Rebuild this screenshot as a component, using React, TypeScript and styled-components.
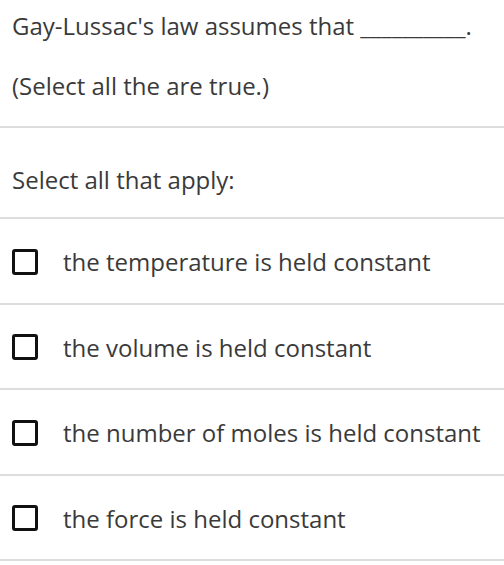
import React from 'react'
import styled, { createGlobalStyle } from 'styled-components'

const GlobalStyle = createGlobalStyle`
    body {
        margin: 0;
        background: #fff;
        font-family: "Open Sans", "Liberation Sans", sans-serif;
        color: #3a3a3a;
    }
`

const Container = styled.div`
    width: 504px;
    display: flex;
    flex-direction: column;
`

const Prompt = styled.div`
    padding: 10px 12px 0 12px;
    border-bottom: 2px solid #dddddd;
    height: 128px;
    box-sizing: border-box;
`

const Line = styled.p`
    margin: 0 0 28px 0;
    font-size: 24px;
    line-height: 32px;
`

const Instruction = styled.div`
    height: 91px;
    display: flex;
    align-items: center;
    padding: 14px 12px 0 12px;
    font-size: 24px;
    border-bottom: 2px solid #dddddd;
    box-sizing: border-box;
`

const Option = styled.label<{ $height: number }>`
    height: ${(p) => p.$height}px;
    display: flex;
    align-items: center;
    padding: 1px 12px 0 12px;
    border-bottom: 2px solid #dddddd;
    box-sizing: border-box;
    font-size: 24px;
    cursor: pointer;
`

const Box = styled.span`
    width: 26px;
    height: 26px;
    border: 3px solid #111;
    border-radius: 3px;
    box-sizing: border-box;
    margin-right: 25px;
    flex-shrink: 0;
`

const options = [
    'the temperature is held constant',
    'the volume is held constant',
    'the number of moles is held constant',
    'the force is held constant',
]

export default function App() {
    return (
        <Container>
            <GlobalStyle />
            <Prompt>
                <Line>Gay-Lussac's law assumes that __________.</Line>
                <Line>(Select all the are true.)</Line>
            </Prompt>
            <Instruction>Select all that apply:</Instruction>
            {options.map((o, i) => (
                <Option key={o} $height={i % 2 === 0 ? 86 : 85}>
                    <Box />
                    {o}
                </Option>
            ))}
        </Container>
    )
}
